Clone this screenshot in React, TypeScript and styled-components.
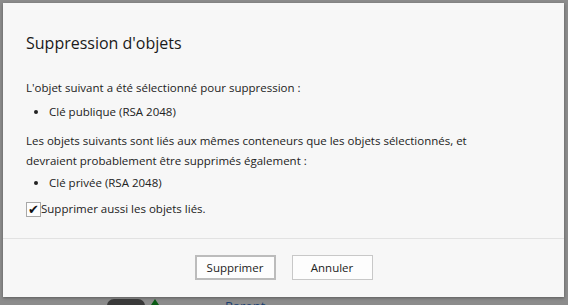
import React from "react";
import styled, { createGlobalStyle } from "styled-components";

const GlobalStyle = createGlobalStyle`
  html, body {
    margin: 0;
    padding: 0;
    background: #8c8c8c;
  }
  * { box-sizing: border-box; }
`;

const Screen = styled.div`
  width: 568px;
  height: 305px;
  overflow: hidden;
  display: flex;
  flex-direction: column;
  padding: 3px 4px 0 3px;
  font-family: "Segoe UI", "Open Sans", "Noto Sans", sans-serif;
  color: #222;
`;

const Dialog = styled.div`
  height: 294px;
  flex-shrink: 0;
  background: #f7f7f7;
  display: flex;
  flex-direction: column;
  box-shadow: 0 1px 3px rgba(0, 0, 0, 0.35);
`;

const Content = styled.div`
  flex: 1;
  padding: 30px 23px 0;
  font-size: 11.5px;
  line-height: 20px;
`;

const Title = styled.h1`
  margin: 0 0 25px;
  font-size: 16px;
  font-weight: 400;
  line-height: 20px;
  color: #1a1a1a;
`;

const Para = styled.p`
  margin: 0;
`;

const List = styled.ul<{ $gap?: number }>`
  margin: ${(p) => p.$gap ?? 4}px 0 0;
  padding: 0 0 0 23px;
  list-style: disc;
  & + p { margin-top: 9px; }
`;

const CheckRow = styled.label`
  display: flex;
  align-items: center;
  margin-top: 6px;
`;

const Box = styled.span`
  position: relative;
  width: 15px;
  height: 15px;
  border: 1px solid #a8a8a8;
  background: #fdfdfd;
  flex-shrink: 0;
  > span {
    position: absolute;
    left: 1px;
    top: -3px;
    font-size: 13px;
    line-height: 20px;
    color: #111;
    font-family: "DejaVu Sans", sans-serif;
  }
`;

const Footer = styled.div`
  height: 59px;
  border-top: 1px solid #e2e2e2;
  display: flex;
  justify-content: center;
  align-items: flex-start;
  gap: 16px;
  padding-top: 16px;
`;

const Button = styled.button<{ $primary?: boolean }>`
  width: 81px;
  height: 25px;
  font-family: inherit;
  font-size: 11.5px;
  color: #222;
  background: #fdfdfd;
  border: ${(p) => (p.$primary ? "2px solid #bcbcbc" : "1px solid #c8c8c8")};
  padding: 0;
`;

const Behind = styled.div`
  display: flex;
  align-items: flex-start;
  gap: 6px;
  padding: 2px 0 0 104px;
  height: 8px;
  overflow: hidden;
`;

const Pill = styled.span`
  width: 38px;
  height: 14px;
  border-radius: 7px;
  background: #3a3a3a;
`;

const Arrow = styled.span`
  width: 0;
  height: 0;
  border-left: 4px solid transparent;
  border-right: 4px solid transparent;
  border-bottom: 6px solid #0a5a14;
`;

const BehindText = styled.span`
  margin-left: 60px;
  font-size: 13px;
  line-height: 14px;
  color: #1b3f70;
`;

export default function App() {
  return (
    <Screen>
      <GlobalStyle />
      <Dialog>
        <Content>
          <Title>Suppression d'objets</Title>
          <Para>L'objet suivant a été sélectionné pour suppression :</Para>
          <List>
            <li>Clé publique (RSA 2048)</li>
          </List>
          <Para>
            Les objets suivants sont liés aux mêmes conteneurs que les objets sélectionnés, et
            <br />
            devraient probablement être supprimés également :
          </Para>
          <List $gap={2}>
            <li>Clé privée (RSA 2048)</li>
          </List>
          <CheckRow>
            <Box>
              <span>✔</span>
            </Box>
            Supprimer aussi les objets liés.
          </CheckRow>
        </Content>
        <Footer>
          <Button $primary>Supprimer</Button>
          <Button>Annuler</Button>
        </Footer>
      </Dialog>
      <Behind>
        <Pill />
        <Arrow />
        <BehindText>Parent</BehindText>
      </Behind>
    </Screen>
  );
}
